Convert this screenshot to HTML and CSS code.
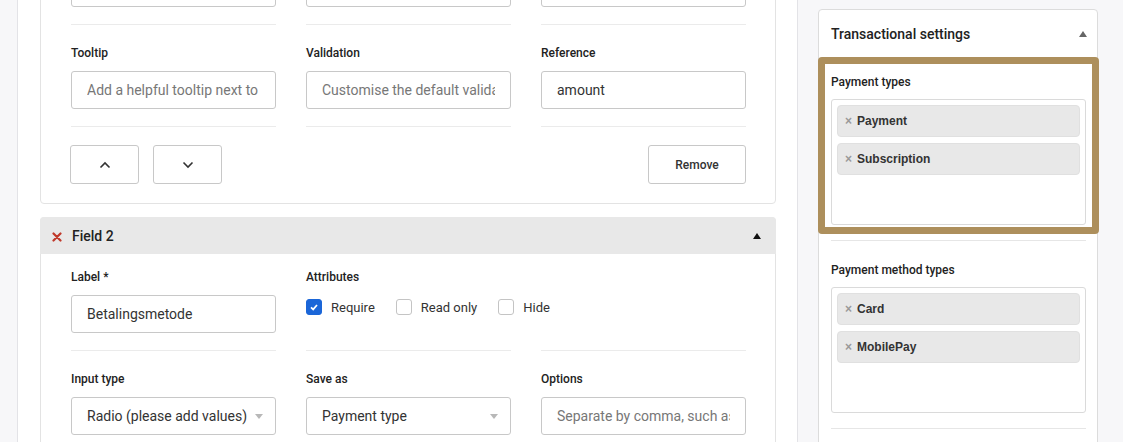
FILE: index.html
```html
<!DOCTYPE html>
<html lang="en">
  <head>
    <meta charset="UTF-8" />
    <title>Form builder</title>
    <link rel="stylesheet" href="styles.css">
  </head>
  <body>
    <div class="app">
      <div class="rail"></div>

      <div class="main">
        <!-- field 1 (scrolled, top part out of view) -->
        <div class="card first">
          <div class="card-body">
            <div class="row">
              <div class="cell">
                <input class="input" type="text" />
              </div>
              <div class="cell">
                <input class="input" type="text" />
              </div>
              <div class="cell">
                <input class="input" type="text" />
              </div>
            </div>
            <div class="row">
              <div class="cell">
                <div class="label">Tooltip</div>
                <input class="input" type="text" placeholder="Add a helpful tooltip next to the field" />
              </div>
              <div class="cell">
                <div class="label">Validation</div>
                <input class="input" type="text" placeholder="Customise the default validation message" />
              </div>
              <div class="cell">
                <div class="label">Reference</div>
                <input class="input" type="text" value="amount" />
              </div>
            </div>
            <div class="actions">
              <button class="btn btn-icon">
                <svg width="12" height="8" viewBox="0 0 12 8"><polyline points="1.5,6.5 6,2 10.5,6.5" fill="none" stroke="#333" stroke-width="1.6" /></svg>
              </button>
              <button class="btn btn-icon">
                <svg width="12" height="8" viewBox="0 0 12 8"><polyline points="1.5,1.5 6,6 10.5,1.5" fill="none" stroke="#333" stroke-width="1.6" /></svg>
              </button>
              <button class="btn btn-remove">Remove</button>
            </div>
          </div>
        </div>

        <!-- field 2 -->
        <div class="card">
          <div class="card-head">
            <svg class="del" width="10" height="10" viewBox="0 0 10 10"><path d="M1.5 1.5 L8.5 8.5 M8.5 1.5 L1.5 8.5" stroke="#c0392b" stroke-width="2.2" stroke-linecap="round" /></svg>
            <span class="card-title">Field 2</span>
            <svg class="caret" width="8" height="6" viewBox="0 0 8 6"><polygon points="0,6 4,0 8,6" fill="#111" /></svg>
          </div>
          <div class="card-body">
            <div class="row row-top">
              <div class="cell">
                <div class="label">Label *</div>
                <input class="input" type="text" value="Betalingsmetode" />
              </div>
              <div class="cell">
                <div class="label">Attributes</div>
                <div class="checks">
                  <span class="check on"><svg width="16" height="16" viewBox="0 0 16 16"><polyline points="5,8.3 7.2,10.4 11,6" fill="none" stroke="#fff" stroke-width="1.7" /></svg></span>
                  <span class="check-text">Require</span>
                  <span class="check"></span>
                  <span class="check-text">Read only</span>
                  <span class="check"></span>
                  <span class="check-text">Hide</span>
                </div>
              </div>
              <div class="cell"></div>
            </div>
            <div class="row">
              <div class="cell">
                <div class="label">Input type</div>
                <div class="input select">Radio (please add values)</div>
              </div>
              <div class="cell">
                <div class="label">Save as</div>
                <div class="input select">Payment type</div>
              </div>
              <div class="cell">
                <div class="label">Options</div>
                <input class="input" type="text" placeholder="Separate by comma, such as: a, b, c" />
              </div>
            </div>
          </div>
        </div>
      </div>

      <div class="side">
        <div class="panel">
          <div class="panel-head">
            <span>Transactional settings</span>
            <svg width="8" height="6" viewBox="0 0 8 6"><polygon points="0,6 4,0 8,6" fill="#666" /></svg>
          </div>

          <div class="section highlight">
            <div class="section-inner">
              <div class="label">Payment types</div>
              <div class="multi">
                <div class="chip"><span class="x">×</span>Payment</div>
                <div class="chip"><span class="x">×</span>Subscription</div>
              </div>
            </div>
          </div>

          <div class="section">
            <div class="section-inner">
              <div class="label">Payment method types</div>
              <div class="multi">
                <div class="chip"><span class="x">×</span>Card</div>
                <div class="chip"><span class="x">×</span>MobilePay</div>
              </div>
            </div>
          </div>
        </div>
      </div>
    </div>
  </body>
</html>
```

FILE: styles.css
```css
* {
  margin: 0;
  padding: 0;
  box-sizing: border-box;
}

body {
  font-family: Roboto, "Liberation Sans", sans-serif;
  color: #222;
  background: #fff;
}

.app {
  display: flex;
  width: 1123px;
  height: 442px;
  overflow: hidden;
}

.rail {
  width: 18px;
  flex: none;
  background: #f7f7f9;
  border-right: 1px solid #e3e3e7;
}

.main {
  width: 780px;
  flex: none;
  padding: 0 21px 0 22px;
  border-right: 1px solid #e3e3e7;
  background: #fff;
}

.side {
  flex: 1;
  background: #f7f7f9;
  padding: 9px 0 0 20px;
}

/* cards */
.card {
  border: 1px solid #e3e3e3;
  border-radius: 4px;
  background: #fff;
  margin-top: 13px;
}

.card.first {
  margin-top: -32px;
}

.card.first .row:first-child .cell {
  padding-top: 0;
}

.card-body {
  padding: 0 28px 0 30px;
}

.card-head {
  display: flex;
  align-items: center;
  height: 37px;
  margin: -1px -1px 0;
  padding: 0 15px 0 12px;
  background: #e8e8e8;
  border-radius: 4px 4px 0 0;
}

.card-head .del {
  margin-right: 10px;
  margin-top: 2px;
}

.card-title {
  font-size: 14px;
  font-weight: 500;
  color: #222;
  flex: 1;
}

.row {
  display: grid;
  grid-template-columns: repeat(3, 205px);
  column-gap: 30px;
}

.cell {
  padding: 20px 0 17px;
  border-bottom: 1px solid #ebebeb;
}

.row-top .cell {
  padding-top: 15px;
}

.label {
  font-size: 12px;
  line-height: 16px;
  font-weight: 500;
  color: #222;
  margin-bottom: 10px;
}

.input {
  display: block;
  width: 205px;
  height: 38px;
  border: 1px solid #c8c8c8;
  border-radius: 3px;
  padding: 0 15px;
  font-family: Roboto, "Liberation Sans", sans-serif;
  font-size: 14px;
  line-height: 36px;
  color: #333;
  background: #fff;
  outline: none;
  white-space: nowrap;
  overflow: hidden;
}

.input::placeholder {
  color: #777;
}

.select {
  position: relative;
}

.select::after {
  content: "";
  position: absolute;
  right: 12px;
  top: 16px;
  border-left: 4px solid transparent;
  border-right: 4px solid transparent;
  border-top: 5px solid #b8b8b8;
}

/* attributes */
.checks {
  display: flex;
  align-items: center;
  padding-top: 4px;
  white-space: nowrap;
  font-size: 13px;
  color: #333;
}

.check {
  width: 16px;
  height: 16px;
  border: 1px solid #c4c4c4;
  border-radius: 3px;
  background: #fff;
  flex: none;
}

.check.on {
  background: #1b66d8;
  border-color: #1b66d8;
}

.check.on svg {
  display: block;
  margin: -1px;
}

.check-text {
  margin-left: 9px;
  margin-right: 21px;
}

/* buttons */
.actions {
  display: flex;
  gap: 14px;
  padding: 18px 0 19px;
  margin-left: -1px;
}

.btn {
  height: 39px;
  border: 1px solid #c8c8c8;
  border-radius: 3px;
  background: #fff;
  font-family: Roboto, "Liberation Sans", sans-serif;
  font-size: 12px;
  font-weight: 500;
  color: #333;
}

.btn-icon {
  width: 69px;
  display: flex;
  align-items: center;
  justify-content: center;
}

.btn-remove {
  width: 98px;
  margin-left: auto;
  margin-right: 1px;
}

/* side panel */
.panel {
  width: 280px;
  border: 1px solid #dcdcdc;
  border-radius: 4px;
  background: #fff;
  min-height: 500px;
}

.panel-head {
  height: 46px;
  display: flex;
  align-items: center;
  justify-content: space-between;
  padding: 2px 10px 0 12px;
  font-size: 14px;
  font-weight: 500;
  color: #222;
}

.section {
  padding: 0 11px 0 12px;
}

.section-inner {
  padding: 21px 0 15px;
  border-bottom: 1px solid #e6e6e6;
}

.highlight {
  position: relative;
}

.highlight .section-inner {
  padding-top: 18px;
}

.highlight::after {
  content: "";
  position: absolute;
  top: 1px;
  left: -1px;
  right: -2px;
  bottom: 7px;
  border: 7px solid #ad8f5c;
  border-radius: 4px;
}

.section .label {
  margin-bottom: 9px;
}

.multi {
  height: 126px;
  border: 1px solid #dadada;
  border-radius: 3px;
  padding: 5px;
}

.chip {
  height: 32px;
  line-height: 30px;
  margin-bottom: 6px;
  padding-left: 7px;
  background: #e8e8e8;
  border: 1px solid #e0e0e0;
  border-radius: 4px;
  font-family: "Liberation Sans", Arial, sans-serif;
  font-size: 12px;
  font-weight: bold;
  color: #333;
}

.chip .x {
  color: #999;
  margin-right: 5px;
  font-size: 12px;
}
```
